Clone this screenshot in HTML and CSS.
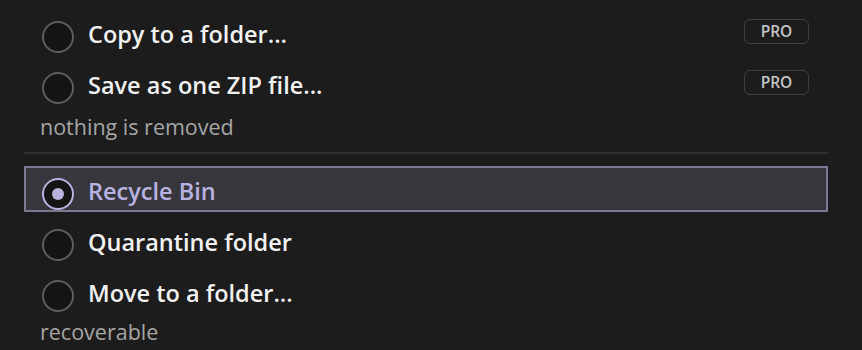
FILE: index.html
```html
<!DOCTYPE html>
<html>
<head>
<meta name="viewport" content="width=device-width, initial-scale=1">
<title>Cleanup target</title>
<link rel="stylesheet" href="styles.css">
</head>
<body>

<div class="panel">
  <div class="option">
    <span class="radio"></span>
    <span class="label">Copy to a folder...</span>
    <span class="pro">PRO</span>
  </div>
  <div class="option">
    <span class="radio"></span>
    <span class="label">Save as one ZIP file...</span>
    <span class="pro">PRO</span>
  </div>
  <div class="caption">nothing is removed</div>

  <div class="divider"></div>

  <div class="option selected">
    <span class="radio"></span>
    <span class="label">Recycle Bin</span>
  </div>
  <div class="option">
    <span class="radio"></span>
    <span class="label">Quarantine folder</span>
  </div>
  <div class="option">
    <span class="radio"></span>
    <span class="label">Move to a folder...</span>
  </div>
  <div class="caption tight">recoverable</div>
</div>

</body>
</html>
```

FILE: styles.css
```css
body {
  margin: 0;
  background-color: #1c1c1c;
  font-family: "Open Sans", "Noto Sans", sans-serif;
}

.panel {
  padding: 11px 34px 0 24px;
}

/* one row of the list */
.option {
  display: flex;
  align-items: center;
  height: 51px;
  padding: 0 19px 0 18px;
  box-sizing: border-box;
}

.radio {
  width: 32px;
  height: 32px;
  box-sizing: border-box;
  border: 2px solid #5c5c5c;
  border-radius: 50%;
  background-color: #141414;
  flex-shrink: 0;
}

.label {
  margin-left: 14px;
  margin-bottom: 5px;
  color: #f2f2f2;
  font-size: 23.5px;
  font-weight: 600;
  line-height: 30px;
  flex: 1;
}

.pro {
  width: 65px;
  height: 25px;
  box-sizing: border-box;
  border: 1.5px solid #3e3e3e;
  border-radius: 6px;
  margin-bottom: 11px;
  color: #c4c4c4;
  font-size: 15.5px;
  font-weight: 600;
  line-height: 22px;
  text-align: center;
}

.caption {
  color: #a6a6a6;
  font-size: 21.5px;
  line-height: 28px;
  padding-left: 16px;
}

.caption.tight {
  line-height: 22px;
}

.divider {
  height: 2px;
  background-color: #2e2e2e;
  margin: 11px 0 12px;
}

/* the chosen row */
.option.selected {
  height: 46px;
  padding-top: 9px;
  border: 2px solid #7c7892;
  background-color: #37363c;
  padding-left: 16px;
  margin-bottom: 7px;
}

.option.selected .radio {
  position: relative;
  border-color: #b8b2de;
}

.option.selected .radio::after {
  content: "";
  position: absolute;
  left: 8px;
  top: 8px;
  width: 12px;
  height: 12px;
  border-radius: 50%;
  background-color: #b8b2de;
}

.option.selected .label {
  color: #b8b2e0;
}
```
